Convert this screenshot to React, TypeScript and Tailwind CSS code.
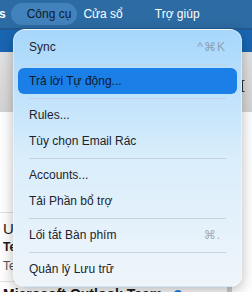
import React from 'react';

type Row =
    | { kind: 'item'; label: string; shortcut?: string; active?: boolean }
    | { kind: 'sep' };

const rows: Row[] = [
    { kind: 'item', label: 'Sync', shortcut: '^⌘K' },
    { kind: 'sep' },
    { kind: 'item', label: 'Trả lời Tự động...', active: true },
    { kind: 'sep' },
    { kind: 'item', label: 'Rules...' },
    { kind: 'item', label: 'Tùy chọn Email Rác' },
    { kind: 'sep' },
    { kind: 'item', label: 'Accounts...' },
    { kind: 'item', label: 'Tải Phần bổ trợ' },
    { kind: 'sep' },
    { kind: 'item', label: 'Lối tắt Bàn phím', shortcut: '⌘.' },
    { kind: 'sep' },
    { kind: 'item', label: 'Quản lý Lưu trữ' },
];

function MenuBar() {
    return (
        <div className="h-[28px] bg-[#2c6ba3] flex items-center text-[12px] text-white">
            <span className="-ml-[1px] font-bold">s</span>
            <div className="ml-[5px] h-[22px] rounded-full bg-[#4282bd] flex items-center pl-[16px] pr-[6px] text-[#0e1c2b]">
                Công cụ
            </div>
            <span className="ml-[6px]">Cửa sổ</span>
            <span className="ml-[32px]">Trợ giúp</span>
        </div>
    );
}

function Background() {
    return (
        <div className="flex flex-col h-[264px]">
            <div className="h-[24px] bg-[#1a66b3] border-t-2 border-[#215a93]" />
            <div className="h-[60px] bg-gradient-to-b from-[#e2e2e2] to-[#d4d4d4] flex justify-end items-center pr-[7px]">
                <svg width="5" height="12" viewBox="0 0 5 12" className="mt-[8px]">
                    <path d="M0.5 0.5h4M2.5 0.5v11M0.5 11.5h4" stroke="#333" strokeWidth="1" fill="none" />
                </svg>
            </div>
            <div className="flex-1 bg-white flex overflow-hidden">
                <div className="flex-1 flex flex-col pt-[100px]">
                    <div className="border-t border-[#e2e2e2] pt-[7px] pb-[5px] pl-[3px] flex flex-col">
                        <div className="w-[10px] overflow-hidden whitespace-nowrap flex flex-col">
                            <span className="text-[15px] leading-[18px] text-[#1a1a1a]">U</span>
                            <span className="text-[12px] leading-[19px] font-bold text-[#1a1a1a]">Te</span>
                            <span className="text-[12px] leading-[19px] text-[#555]">Te</span>
                        </div>
                    </div>
                    <div className="border-t border-[#e2e2e2] pt-[3px] pl-[3px] flex items-center">
                        <span className="text-[14px] leading-[18px] font-bold text-[#1a1a1a] whitespace-nowrap">Microsoft Outlook Team</span>
                        <span className="ml-[12px] w-[8px] h-[8px] rounded-full bg-[#1a7fe8]" />
                    </div>
                </div>
                <div className="w-[5px] bg-[#cfcfcf] mr-[20px]" />
            </div>
        </div>
    );
}

function Dropdown() {
    return (
        <div className="absolute left-[13px] top-[29px] w-[229px] rounded-[12px] py-[4px] pl-[4px] pr-[4px] bg-gradient-to-b from-[#a6d7fb] via-[#d9edfb] to-[#eff5fa] shadow-[0_4px_14px_rgba(0,0,0,0.28)] border border-white/40 text-[12px] text-[#1c232b]">
            {rows.map((row, i) =>
                row.kind === 'sep' ? (
                    <div key={i} className="h-px bg-[#c3d3df] mx-[11px] my-[3.5px]" />
                ) : (
                    <div
                        key={i}
                        className={
                            'h-[26px] flex items-center px-[11px] rounded-[6px] ' +
                            (row.active ? 'bg-[#1b7fe8] text-[#0a1a2c]' : '')
                        }
                    >
                        <span>{row.label}</span>
                        {row.shortcut && (
                            <span
                                className={
                                    'ml-auto tracking-[1px] ' +
                                    (row.shortcut === '⌘.' ? 'mr-[5px] text-[#a3abb3]' : 'text-[#8ba1b4]')
                                }
                            >
                                {row.shortcut}
                            </span>
                        )}
                    </div>
                )
            )}
        </div>
    );
}

export default function App() {
    return (
        <div className="w-[252px] h-[292px] relative overflow-hidden bg-white font-['Liberation_Sans','DejaVu_Sans',sans-serif]">
            <MenuBar />
            <Background />
            <Dropdown />
        </div>
    );
}
